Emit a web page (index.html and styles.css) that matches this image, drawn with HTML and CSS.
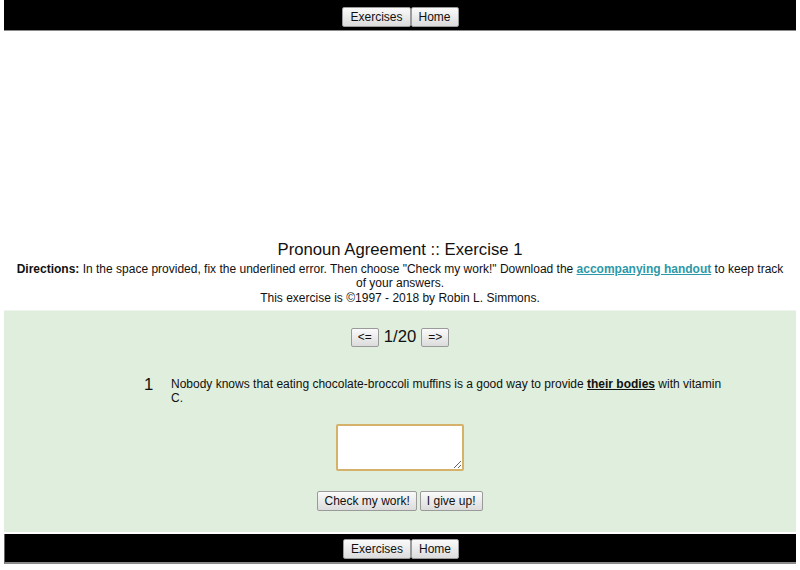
FILE: index.html
```html
<!DOCTYPE html>
<html>
<head>
<meta charset="utf-8">
<link rel="stylesheet" href="styles.css">
</head>
<body>
<div class="page">
  <div class="navbar">
    <button class="navbtn">Exercises</button><button class="navbtn">Home</button>
  </div>
  <div class="spacer"></div>
  <div class="header">
    <div class="title">Pronoun Agreement :: Exercise 1</div>
    <div class="directions"><b>Directions:</b> In the space provided, fix the underlined error. Then choose "Check my work!" Download the <a class="link" href="#">accompanying handout</a> to keep track of your answers.</div>
    <div class="copy">This exercise is ©1997 - 2018 by Robin L. Simmons.</div>
  </div>
  <div class="panel">
    <div class="pager">
      <button class="btn">&lt;=</button><span class="count">1/20</span><button class="btn">=&gt;</button>
    </div>
    <div class="question">
      <div class="qnum">1</div>
      <div class="qtext">Nobody knows that eating chocolate-broccoli muffins is a good way to provide <u class="err">their bodies</u> with vitamin C.</div>
    </div>
    <div class="answer">
      <textarea class="input"></textarea>
    </div>
    <div class="actions">
      <button class="btn big">Check my work!</button><button class="btn big">I give up!</button>
    </div>
  </div>
  <div class="navbar bottom">
    <button class="navbtn">Exercises</button><button class="navbtn">Home</button>
  </div>
</div>
</body>
</html>
```
FILE: styles.css
```css
html, body {
  margin: 0;
  padding: 0;
  background: #fff;
}
body {
  font-family: "Liberation Sans", Arial, sans-serif;
  color: #111;
}
.page {
  margin: 0 4px;
}
.navbar {
  background: #000;
  height: 31px;
  box-sizing: border-box;
  border-bottom: 1px solid #8a8a8a;
  display: flex;
  justify-content: center;
  align-items: center;
  padding: 3px 0 0 1px;
}
.navbar.bottom {
  margin-top: 2px;
  height: 30px;
  padding-top: 2px;
  border-left: 1px solid #666;
  border-bottom: 2px solid #8a8a8a;
}
.navbtn, .btn {
  font-family: "Liberation Sans", Arial, sans-serif;
  font-size: 12px;
  color: #111;
  background: linear-gradient(#fafafa, #dcdcdc);
  border: 1px solid #9a9a9a;
  border-radius: 2px;
  padding: 0 7px;
  height: 20px;
  margin: 0;
}
.spacer {
  height: 208px;
}
.header {
  text-align: center;
  padding: 0 12px;
}
.title {
  font-size: 16.7px;
  line-height: 22px;
}
.directions {
  font-size: 12px;
  line-height: 14px;
  margin-top: 1px;
}
.link {
  color: #2d98a8;
  font-weight: bold;
}
.copy {
  font-size: 12px;
  line-height: 14px;
  margin-top: 1px;
}
.panel {
  background: #dfeedd;
  margin-top: 5px;
  border-top: 1px solid #eef5ec;
  padding: 16px 0 21px;
}
.pager {
  display: flex;
  justify-content: center;
  align-items: center;
}
.pager .btn {
  width: 28px;
  height: 19px;
  padding: 0;
}
.count {
  font-size: 16.7px;
  margin: 0 5px;
}
.question {
  display: flex;
  margin-top: 28px;
  padding-left: 140px;
  padding-right: 62px;
}
.qnum {
  width: 27px;
  font-size: 16.7px;
  line-height: 20px;
}
.qtext {
  flex: 1;
  font-size: 12px;
  line-height: 14px;
  padding-top: 2px;
}
.err {
  font-weight: bold;
}
.answer {
  display: flex;
  justify-content: center;
  margin-top: 19px;
}
.input {
  width: 122px;
  height: 41px;
  border: 2px solid #d6b16a;
  border-radius: 2px;
  background: #fff;
  padding: 1px;
  margin: 0;
  resize: both;
}
.actions {
  display: flex;
  justify-content: center;
  gap: 3px;
  margin-top: 20px;
}
.btn.big {
  height: 20px;
  padding: 0 6px;
}
```
